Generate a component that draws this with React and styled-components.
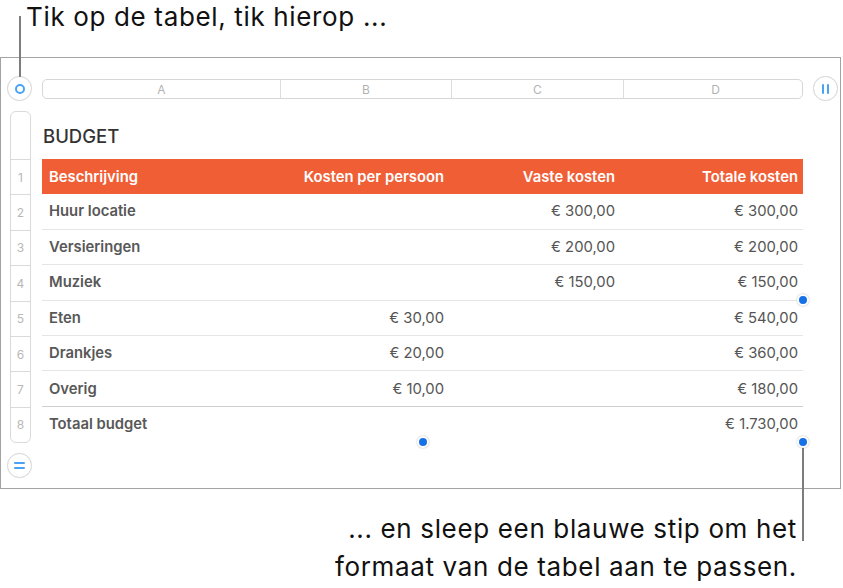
import React from 'react'
import styled, { createGlobalStyle } from 'styled-components'

const GlobalStyle = createGlobalStyle`
  body {
    margin: 0;
    background: #ffffff;
    font-family: Inter, Roboto, 'Liberation Sans', sans-serif;
  }
`

const columns = [
  { label: 'A', width: 237 },
  { label: 'B', width: 170 },
  { label: 'C', width: 171 },
  { label: 'D', width: 183 },
]

const rows = [
  ['Huur locatie', '', '€ 300,00', '€ 300,00'],
  ['Versieringen', '', '€ 200,00', '€ 200,00'],
  ['Muziek', '', '€ 150,00', '€ 150,00'],
  ['Eten', '€ 30,00', '', '€ 540,00'],
  ['Drankjes', '€ 20,00', '', '€ 360,00'],
  ['Overig', '€ 10,00', '', '€ 180,00'],
]

const App = () => {
  return (
    <Page>
      <GlobalStyle />
      <Callout>Tik op de tabel, tik hierop ...</Callout>
      <Leader style={{ left: 19, top: 16, height: 61 }} />

      <Frame>
        <Gutter>
          <RoundButton>
            <Ring />
          </RoundButton>
        </Gutter>
        <ColumnBar>
          {columns.map(c => (
            <ColumnCell key={c.label} $width={c.width}>
              {c.label}
            </ColumnCell>
          ))}
        </ColumnBar>
        <RightGutter>
          <RoundButton>
            <Bars $vertical />
          </RoundButton>
        </RightGutter>

        <Gutter>
          <RowStrip>
            <StripTop />
            {[1, 2, 3, 4, 5, 6, 7, 8].map(n => (
              <RowNumber key={n}>{n}</RowNumber>
            ))}
          </RowStrip>
          <RoundButton>
            <Bars />
          </RoundButton>
        </Gutter>

        <TableArea>
          <Title>BUDGET</Title>
          <TableWrap>
            <Table>
              <colgroup>
                {columns.map(c => (
                  <col key={c.label} style={{ width: c.width }} />
                ))}
              </colgroup>
              <thead>
                <tr>
                  <Th>Beschrijving</Th>
                  <Th $right>Kosten per persoon</Th>
                  <Th $right>Vaste kosten</Th>
                  <Th $right>Totale kosten</Th>
                </tr>
              </thead>
              <tbody>
                {rows.map((r, i) => (
                  <tr key={r[0]}>
                    <Label $last={i === rows.length - 1}>{r[0]}</Label>
                    <Amount $last={i === rows.length - 1}>{r[1]}</Amount>
                    <Amount $last={i === rows.length - 1}>{r[2]}</Amount>
                    <Amount $last={i === rows.length - 1}>{r[3]}</Amount>
                  </tr>
                ))}
              </tbody>
              <tfoot>
                <tr>
                  <Label $foot>Totaal budget</Label>
                  <Amount $foot />
                  <Amount $foot />
                  <Amount $foot>€ 1.730,00</Amount>
                </tr>
              </tfoot>
            </Table>
            <Handle style={{ right: -6, top: 135 }} />
            <Handle style={{ left: 375, bottom: -6 }} />
            <Handle style={{ right: -6, bottom: -6 }} />
          </TableWrap>
        </TableArea>
      </Frame>

      <Leader style={{ left: 802, top: 446, height: 95 }} />
      <BottomCallout>
        ... en sleep een blauwe stip om het
        <br />
        formaat van de tabel aan te passen.
      </BottomCallout>
    </Page>
  )
}

const Page = styled.div`
  position: relative;
  width: 843px;
  height: 588px;
  overflow: hidden;
`

const Callout = styled.div`
  height: 57px;
  padding-left: 26px;
  box-sizing: border-box;
  font-size: 26px;
  line-height: 34px;
  letter-spacing: 0.65px;
  color: #111;
`

const Leader = styled.div`
  position: absolute;
  width: 2px;
  background: #7d7d7d;
  z-index: 2;
`

const Frame = styled.div`
  width: 841px;
  height: 432px;
  box-sizing: border-box;
  border: 1px solid #a3a3a3;
  display: grid;
  grid-template-columns: 41px 761px 1fr;
  grid-template-rows: 53px 1fr;
  align-items: start;
`

const Gutter = styled.div`
  display: flex;
  flex-direction: column;
  align-items: flex-start;
  padding-left: 6px;
  gap: 10px;

  &:first-child {
    padding-top: 18px;
  }
`

const RightGutter = styled.div`
  padding-top: 18px;
  padding-left: 10px;
`

const RoundButton = styled.div`
  width: 25px;
  height: 25px;
  box-sizing: border-box;
  border-radius: 50%;
  border: 1px solid #d8d8d8;
  background: #fff;
  display: flex;
  align-items: center;
  justify-content: center;
  box-shadow: 0 0 1px rgba(0, 0, 0, 0.08);
`

const Ring = styled.div`
  width: 10px;
  height: 10px;
  box-sizing: border-box;
  border-radius: 50%;
  border: 2px solid #4aa2f5;
`

const Bars = styled.div`
  display: flex;
  flex-direction: ${p => (p.$vertical ? 'row' : 'column')};
  gap: 3px;

  &::before,
  &::after {
    content: '';
    display: block;
    background: #4aa2f5;
    width: ${p => (p.$vertical ? '2px' : '11px')};
    height: ${p => (p.$vertical ? '10px' : '2px')};
    border-radius: 1px;
  }
`

const ColumnBar = styled.div`
  margin-top: 21px;
  height: 20px;
  box-sizing: border-box;
  border: 1px solid #d6d6d6;
  border-radius: 5px;
  display: flex;
  overflow: hidden;
`

const ColumnCell = styled.div`
  width: ${p => p.$width}px;
  flex: none;
  display: flex;
  align-items: center;
  justify-content: center;
  font-size: 12px;
  color: #b3b3b3;
  border-right: 1px solid #dcdcdc;

  &:last-child {
    border-right: none;
  }
`

const RowStrip = styled.div`
  margin-left: 3px;
  width: 21px;
  box-sizing: border-box;
  border: 1px solid #dadada;
  border-radius: 6px;
  display: flex;
  flex-direction: column;
`

const StripTop = styled.div`
  height: 47px;
  border-bottom: 1px solid #dadada;
`

const RowNumber = styled.div`
  height: 34.4px;
  display: flex;
  align-items: center;
  justify-content: center;
  font-size: 12px;
  color: #b8b8b8;
  border-bottom: 1px solid #dadada;

  &:last-child {
    border-bottom: none;
  }
`

const TableArea = styled.div`
  display: flex;
  flex-direction: column;
`

const Title = styled.div`
  height: 48px;
  display: flex;
  align-items: center;
  padding-left: 1px;
  padding-top: 2px;
  box-sizing: border-box;
  font-size: 18.5px;
  font-weight: 500;
  color: #333;
`

const TableWrap = styled.div`
  position: relative;
`

const Table = styled.table`
  width: 761px;
  border-collapse: collapse;
  table-layout: fixed;
  font-size: 14.8px;
`

const Th = styled.th`
  height: 35px;
  padding: 0 ${p => (p.$right ? '5px' : '7px')};
  background: #f05e36;
  color: #fff;
  font-weight: 600;
  text-align: ${p => (p.$right ? 'right' : 'left')};
`

const Cell = styled.td`
  height: 35.4px;
  box-sizing: border-box;
  padding: 0 5px;
  color: #555;
  border-bottom: 1px solid ${p => (p.$last ? '#cfcfcf' : p.$foot ? 'transparent' : '#e6e6e6')};
`

const Label = styled(Cell)`
  padding-left: 7px;
  font-weight: 600;
  color: #585858;
`

const Amount = styled(Cell)`
  text-align: right;
`

const Handle = styled.div`
  position: absolute;
  width: 12px;
  height: 12px;
  box-sizing: border-box;
  border-radius: 50%;
  background: #1670e6;
  border: 2px solid #fff;
  box-shadow: 0 0 2px rgba(0, 0, 0, 0.3);
  z-index: 3;
`

const BottomCallout = styled.div`
  padding-top: 21px;
  padding-right: 46px;
  text-align: right;
  font-size: 26px;
  line-height: 38px;
  letter-spacing: 0.65px;
  color: #111;
`

export default App
